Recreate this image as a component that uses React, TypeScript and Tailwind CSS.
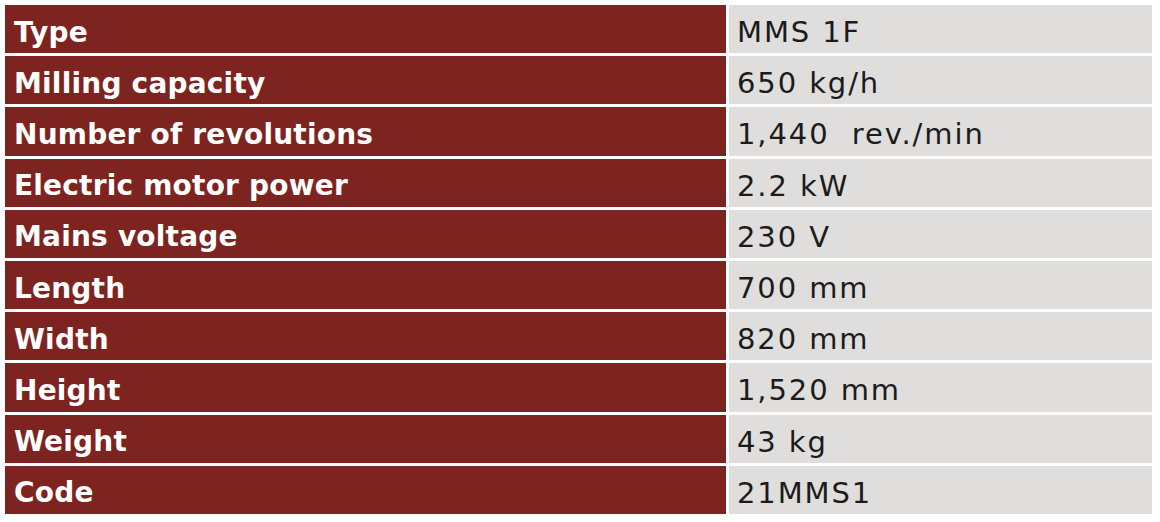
const specs = [
  { label: "Type", value: "MMS 1F" },
  { label: "Milling capacity", value: "650 kg/h" },
  { label: "Number of revolutions", value: "1,440\u00a0 rev./min" },
  { label: "Electric motor power", value: "2.2 kW" },
  { label: "Mains voltage", value: "230 V" },
  { label: "Length", value: "700 mm" },
  { label: "Width", value: "820 mm" },
  { label: "Height", value: "1,520 mm" },
  { label: "Weight", value: "43 kg" },
  { label: "Code", value: "21MMS1" },
];

export default function App() {
  return (
    <div className="w-[1160px] h-[522px] bg-white pt-[5px] pl-[5px]">
      <div className="grid grid-cols-[721px_423px] grid-rows-10 gap-[3px] w-[1147px] h-[509px]">
        {specs.map((row) => (
          <div key={row.label} className="contents">
            {/* Label */}
            <div className="flex items-center bg-[#7e2420] pl-[9px] pt-[7px] text-white font-bold text-[28px] tracking-[0.2px] font-['DejaVu_Sans',sans-serif] leading-none">
              {row.label}
            </div>

            {/* Value */}
            <div className="flex items-center bg-[#dfdedc] pl-[8px] pt-[7px] text-[#1b1b1b] text-[29px] tracking-[1.9px] font-['DejaVu_Sans',sans-serif] leading-none">
              {row.value}
            </div>
          </div>
        ))}
      </div>
    </div>
  );
}
